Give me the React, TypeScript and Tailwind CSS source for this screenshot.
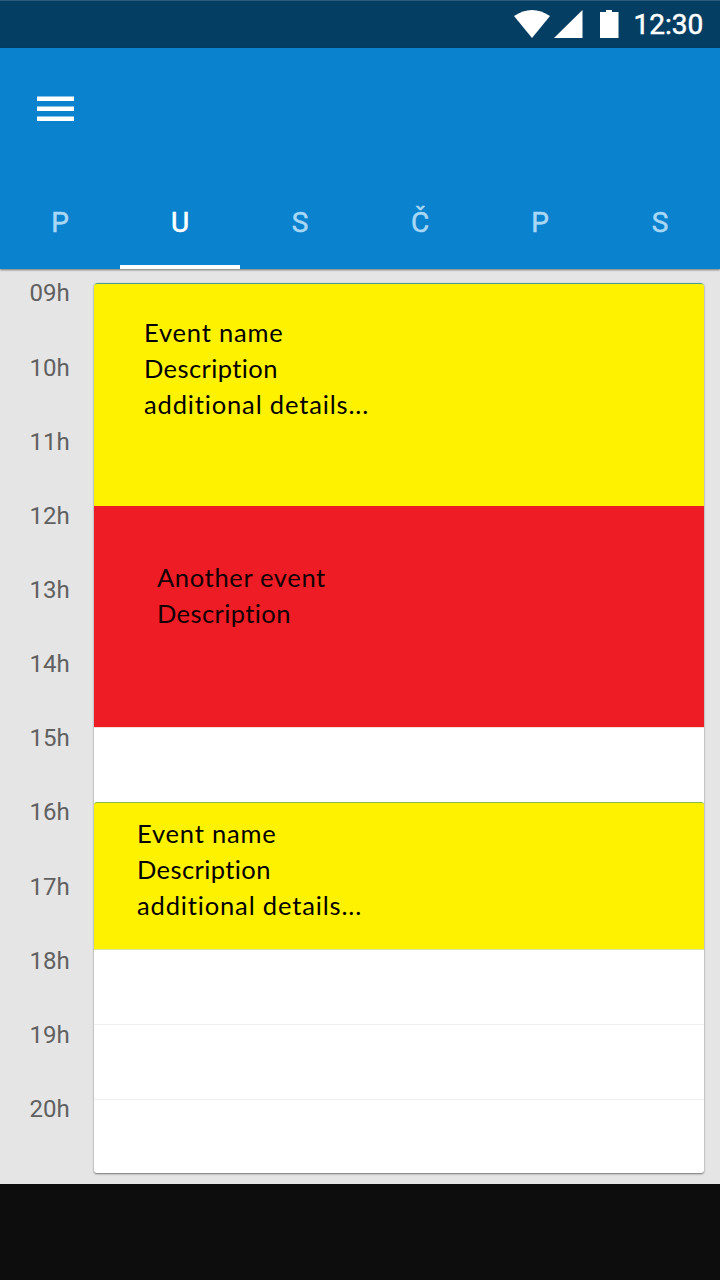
import React from "react";

const days = ["P", "U", "S", "Č", "P", "S"];
const hours = ["09h", "10h", "11h", "12h", "13h", "14h", "15h", "16h", "17h", "18h", "19h", "20h"];

function StatusBar() {
  return (
    <div className="flex h-12 shrink-0 items-start border-t border-[#2b5b7a] bg-[#043f63] pl-[514px] text-white">
      <svg className="mt-[9px] h-7 w-9 shrink-0" viewBox="0 0 36 28" fill="currentColor">
        <path d="M0 6Q18-6 36 6L18 28Z" />
      </svg>
      <svg className="mt-[9px] ml-1 h-7 w-[29px] shrink-0" viewBox="0 0 29 28" fill="currentColor">
        <path d="M0 28L28.5 0V28Z" />
      </svg>
      <svg className="mt-[9px] ml-[17px] h-7 w-[19px] shrink-0" viewBox="0 0 19 28" fill="currentColor">
        <path d="M0 2H6V0H12V2H18.5V28H0Z" />
      </svg>
      <span className="ml-[14.5px] mt-[8px] text-[28px] leading-8 [-webkit-text-stroke:0.5px_currentColor]">12:30</span>
    </div>
  );
}

function Header() {
  return (
    <header className="relative z-10 flex h-[221px] shrink-0 flex-col bg-[#0b82cd] shadow-[0_1px_2px_rgba(0,0,0,0.5)]">
      <button aria-label="Menu" className="ml-[37px] mt-12 h-[26px] w-[37px] text-white">
        <svg className="h-[26px] w-[37px]" viewBox="0 0 37 26" fill="currentColor">
          <path d="M0 .5H37V5H0ZM0 10.6H37V15H0ZM0 20.6H37V25H0Z" />
        </svg>
      </button>
      <nav className="mt-auto grid h-24 grid-cols-6">
        {days.map((day, i) => (
          <button
            key={i}
            className={
              i === 1
                ? "border-b-4 border-white pt-2 text-[28px] leading-none text-white [-webkit-text-stroke:0.6px_currentColor]"
                : "border-b-4 border-transparent pt-2 text-[28px] leading-none text-[#a9d8f7] [-webkit-text-stroke:0.5px_currentColor]"
            }
          >
            {day}
          </button>
        ))}
      </nav>
    </header>
  );
}

export default function App() {
  return (
    <div className="flex h-[1280px] w-[720px] flex-col overflow-hidden bg-[#0d0d0d] font-['Roboto',sans-serif]">
      <StatusBar />
      <Header />
      <main className="flex h-[915px] shrink-0 bg-[#e5e5e5]">
        <div className="flex w-[94px] shrink-0 flex-col gap-[50.17px] pt-[12.4px] pl-[29.5px] text-2xl leading-6 text-[#606060]">
          {hours.map((hour) => (
            <span key={hour}>{hour}</span>
          ))}
        </div>
        <div className="mt-[14px] flex h-[890px] w-[610px] flex-col overflow-hidden rounded-[3px] bg-white font-['Lato',sans-serif] text-[25.5px] leading-9 text-black shadow-[0_1px_2px_rgba(0,0,0,0.5)]">
          <div className="h-[223px] shrink-0 rounded-t-[3px] border-t border-[#499d96] bg-[#fff200] pt-[30px] pl-[50px]">
            <p className="tracking-[0.8px]">Event name</p>
            <p className="tracking-[0.4px]">Description</p>
            <p className="tracking-[0.85px]">additional details...</p>
          </div>
          <div className="h-[221px] shrink-0 bg-[#ee1c25] pt-[53px] pl-[63px] text-[#120103]">
            <p className="tracking-[0.65px]">Another event</p>
            <p className="tracking-[0.4px]">Description</p>
          </div>
          <div className="h-[75px] shrink-0 border-t border-[#f8ddd5]" />
          <div className="h-[148px] shrink-0 rounded-t-[3px] border-t border-b border-t-[#86b84a] border-b-[#d9e5a0] bg-[#fff200] pt-[12px] pl-[43px]">
            <p className="tracking-[0.8px]">Event name</p>
            <p className="tracking-[0.4px]">Description</p>
            <p className="tracking-[0.85px]">additional details...</p>
          </div>
          <div className="h-[75px] shrink-0 border-b border-[#f0f0f0]" />
          <div className="h-[75px] shrink-0 border-b border-[#eeeeee]" />
          <div className="flex-1" />
        </div>
      </main>
    </div>
  );
}
